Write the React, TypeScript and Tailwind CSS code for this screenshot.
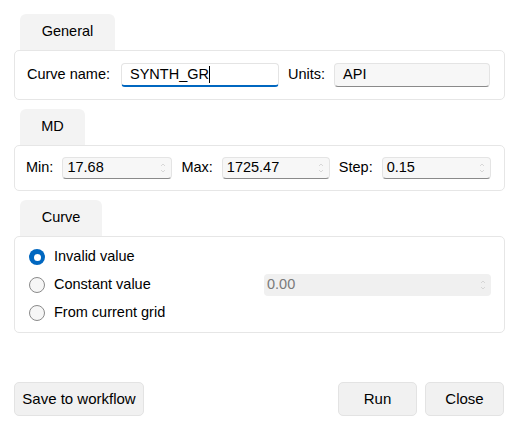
import React from "react";

const font = { fontFamily: '"Liberation Sans", Arial, sans-serif' };

function Spin() {
  return (
    <svg width="6" height="12" viewBox="0 0 6 12" className="shrink-0">
      <path d="M1 4 L3 2 L5 4" stroke="#cfcfcf" strokeWidth="0.8" fill="none" />
      <path d="M1 8 L3 10 L5 8" stroke="#cfcfcf" strokeWidth="0.8" fill="none" />
    </svg>
  );
}

function Tab({ label, w }: { label: string; w: string }) {
  return (
    <div className={`ml-[6px] ${w} h-[36px] rounded-t-[6px] bg-[#f3f3f3] flex items-center justify-center text-[14.5px] text-[#000]`}>
      {label}
    </div>
  );
}

function SpinInput({ value, w }: { value: string; w: string }) {
  return (
    <div className={`${w} h-[22px] rounded-[4px] bg-[#f7f7f7] border border-[#e4e4e4] border-b-[#8a8a8a] flex items-center pl-[4px] pr-[5px] text-[14.5px] text-[#000]`}>
      <span className="flex-1">{value}</span>
      <Spin />
    </div>
  );
}

function Radio({ checked, label }: { checked?: boolean; label: string }) {
  return (
    <div className="flex items-center h-[28px]">
      {checked ? (
        <div className="w-[16px] h-[16px] rounded-full bg-[#0067c0] flex items-center justify-center">
          <div className="w-[7px] h-[7px] rounded-full bg-white" />
        </div>
      ) : (
        <div className="w-[16px] h-[16px] rounded-full border border-[#8a8a8a] bg-[#f6f6f6]" />
      )}
      <span className="ml-[9px] text-[14.5px] text-[#000]">{label}</span>
    </div>
  );
}

function Button({ label, w }: { label: string; w: string }) {
  return (
    <div className={`${w} h-[34px] rounded-[5px] bg-[#f1f1f1] border border-[#e3e3e3] flex items-center justify-center text-[15px] text-[#000]`}>
      {label}
    </div>
  );
}

export default function App() {
  return (
    <div style={font} className="w-[519px] h-[430px] bg-white px-[14px] pt-[14px] flex flex-col">
      <Tab label="General" w="w-[95px]" />
      <div className="h-[50px] border border-[#e6e6e6] rounded-[5px] flex items-center pl-[12px] text-[14.5px] text-[#000]">
        <span>Curve name:</span>
        <div className="ml-[11px] w-[158px] h-[24px] rounded-[4px] bg-white border border-[#e4e4e4] border-b-2 border-b-[#0067c0] flex items-center pl-[8px] text-[14.5px]">
          <span>SYNTH_GR</span>
          <span className="w-[1px] h-[17px] bg-black" />
        </div>
        <span className="ml-[9px]">Units:</span>
        <div className="ml-[9px] w-[156px] h-[24px] rounded-[4px] bg-[#f7f7f7] border border-[#e4e4e4] border-b-[#8a8a8a] flex items-center pl-[8px] text-[14.5px]">
          API
        </div>
      </div>

      <div className="mt-[9px]">
        <Tab label="MD" w="w-[65px]" />
      </div>
      <div className="h-[46px] border border-[#e6e6e6] rounded-[5px] flex items-center pl-[11px] text-[14.5px] text-[#000]">
        <span>Min:</span>
        <div className="ml-[9px]">
          <SpinInput value="17.68" w="w-[110px]" />
        </div>
        <span className="ml-[9px]">Max:</span>
        <div className="ml-[9px]">
          <SpinInput value="1725.47" w="w-[108px]" />
        </div>
        <span className="ml-[9px]">Step:</span>
        <div className="ml-[9px]">
          <SpinInput value="0.15" w="w-[109px]" />
        </div>
      </div>

      <div className="mt-[9px]">
        <Tab label="Curve" w="w-[82px]" />
      </div>
      <div className="h-[97px] border border-[#e6e6e6] rounded-[5px] pl-[14px] pr-[13px] pt-[6px] flex flex-col">
        <Radio checked label="Invalid value" />
        <div className="flex items-center">
          <div className="flex-1">
            <Radio label="Constant value" />
          </div>
          <div className="w-[227px] h-[22px] rounded-[4px] bg-[#f0f0f0] flex items-center pl-[3px] pr-[5px] text-[14.5px] text-[#7a7a7a]">
            <span className="flex-1">0.00</span>
            <Spin />
          </div>
        </div>
        <Radio label="From current grid" />
      </div>

      <div className="mt-[49px] pr-[1px] flex items-center">
        <Button label="Save to workflow" w="w-[130px]" />
        <div className="flex-1" />
        <Button label="Run" w="w-[79px]" />
        <div className="w-[8px]" />
        <Button label="Close" w="w-[79px]" />
      </div>
    </div>
  );
}
